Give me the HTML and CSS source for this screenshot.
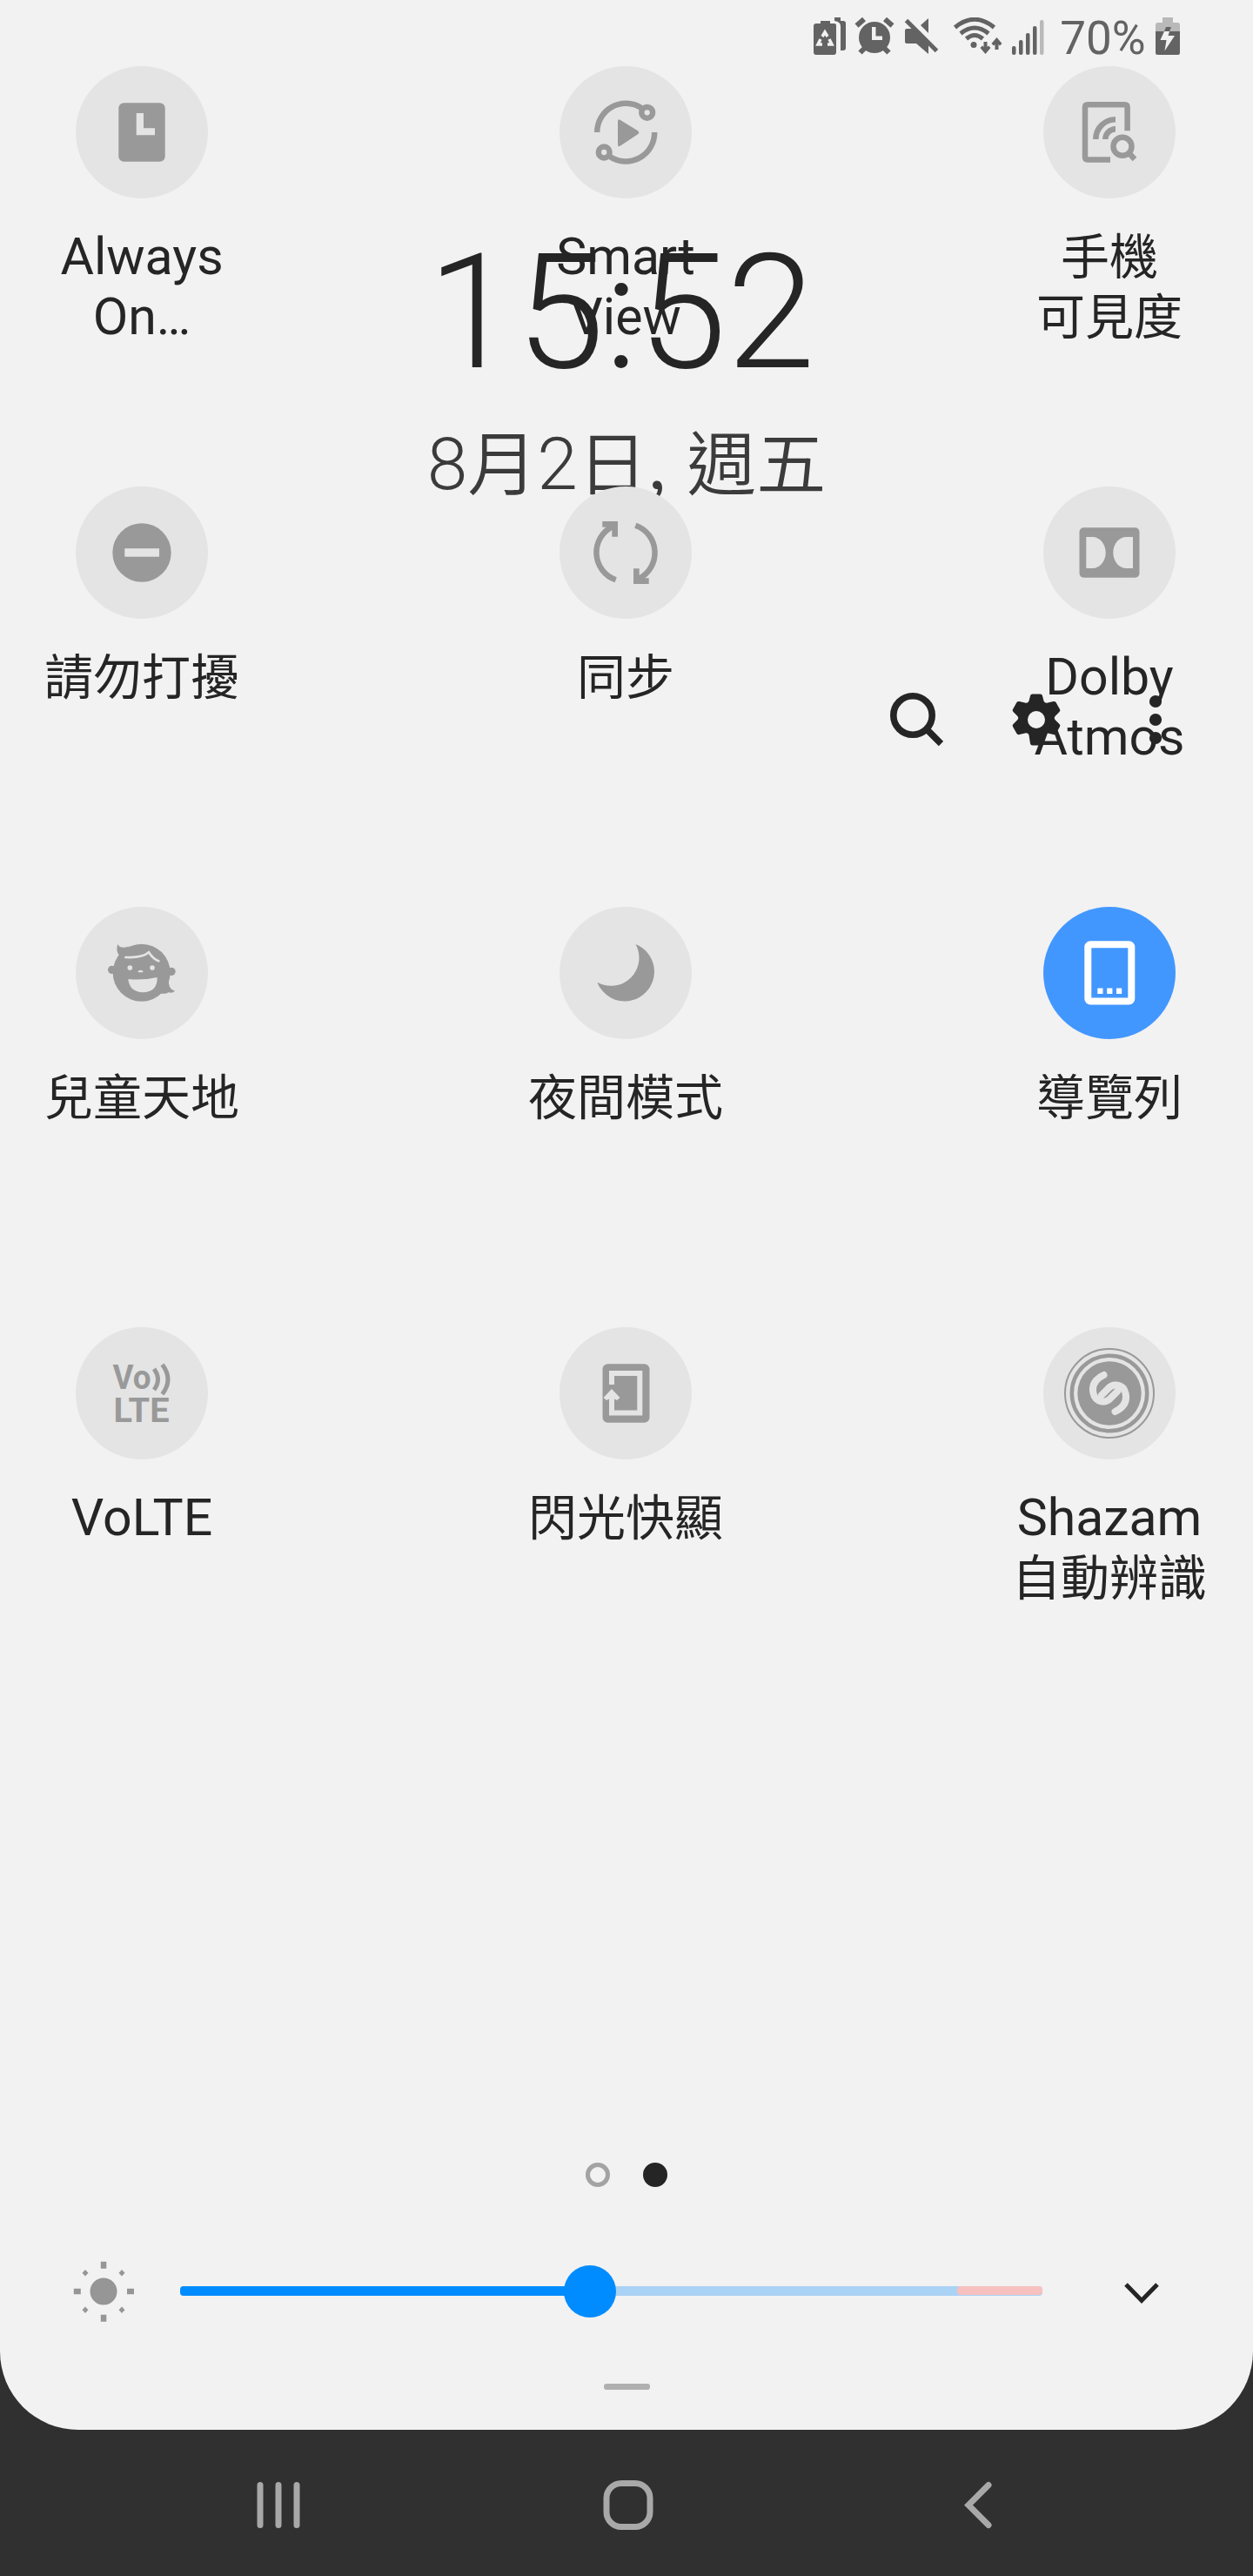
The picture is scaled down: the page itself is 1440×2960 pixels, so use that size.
FILE: index.html
```html
<!DOCTYPE html>
<html lang="zh-Hant">
<head>
    <meta charset="UTF-8">
    <meta name="viewport" content="width=device-width, initial-scale=1.0">
    <title>Quick Settings</title>
    <link rel="stylesheet" href="styles.css">
</head>
<body>
    <div class="panel">
        <div class="status-bar">
            <svg width="38" height="44" viewBox="0 0 38 44">
                <path d="M9 4h11v3h5q2 0 2 2v31q0 3-3 3H4q-3 0-3-3V10q0-3 3-3h5z"/>
                <path d="M25 0h7v4h3q3 0 3 3v28q0 3-3 3h-3V10q0-5-7-6z"/>
                <path class="cutout-line" d="M11 22l3-5 3 5M19 25l3 6h-5M11 31H6l3-6"/>
            </svg>
            <svg width="47" height="44" viewBox="0 0 47 44">
                <circle cx="23" cy="23" r="18"/>
                <path class="line thick" d="M2.500 9.500l8.500-7.500M43.500 9.500L35 2M6.500 40.500l6-6M39.500 40.500l-6-6"/>
                <path class="cutout" d="M20 11h4.500v10.500H32V26H20z"/>
            </svg>
            <svg width="47" height="44" viewBox="0 0 47 44">
                <path d="M3 13h9l16 16v13L14 30H3q-2 0-2-2V15q0-2 2-2zM19 9l9-8v17z"/>
                <path class="line" d="M2.500 3.500l35 35"/>
            </svg>
            <svg width="56" height="44" viewBox="0 0 56 44">
                <path class="line" d="M1.500 11.500Q24-7 46.500 11.500M8 18.500q16-13 32 0M14.500 24.500q9.500-8 19 0"/>
                <path class="line arrow" d="M36.500 28v10M49.500 37V27"/>
                <circle cx="23" cy="31.500" r="3.500"/>
                <path d="M30.500 35l2.500-2.500 3.500 3 3.500-3 2.500 2.500-6 7zM43.500 30l2.500 2.500 3.500-3 3.500 3L55.500 30l-6-7z"/>
            </svg>
            <svg width="42" height="44" viewBox="0 0 42 44">
                <rect x="1" y="33" width="4.500" height="10" rx="2"/>
                <rect x="9" y="26" width="4.500" height="17" rx="2"/>
                <rect x="17" y="18" width="4.500" height="25" rx="2"/>
                <rect x="25" y="10" width="4.500" height="33" rx="2"/>
                <rect class="dim" x="33" y="3" width="4.500" height="40" rx="2"/>
            </svg>
            <span class="battery-text">70%</span>
            <svg width="28" height="44" viewBox="0 0 28 44">
                <path class="dim" d="M8 0h12v6h5.500Q28 6 28 8.500V16H0V8.500Q0 6 2.500 6H8z"/>
                <path d="M0 16h28v24.500q0 2.500-2.500 2.500h-23Q0 43 0 40.500zM12 11h6l-2 5h-6z"/>
                <path class="cutout" d="M10 16h6l-1.500 5H22L10.500 38.500 12.500 26H5.500z"/>
            </svg>
        </div>

        <div class="content">
            <div class="header">
                <div class="clock">15:52</div>
                <div class="date"><span class="num">8</span>月<span class="num">2</span>日, 週五</div>
                <div class="tools">
                    <svg width="62" height="62" viewBox="0 0 62 62">
                        <circle class="line" cx="27" cy="26" r="22.200"/>
                        <path class="line" d="M43 42l16.500 16.500"/>
                    </svg>
                    <svg width="62" height="62" viewBox="0 0 62 62">
                        <path fill-rule="evenodd" d="M26.500 1.500h9q2 0 2.500 2l1.500 6q1.500 3 4.500 2l6.500-1.500q2-.5 3 1l4.500 8q1 1.500-.5 3l-4.500 4.500q-2.500 2.500 0 5l4.500 4.500q1.500 1.500.5 3l-4.500 8q-1 1.500-3 1l-6.500-1.500q-3-1-4.500 2L38 58.500q-.5 2-2.500 2h-9q-2 0-2.500-2l-1.500-10q-1.500-3-4.500-2L11.500 48q-2 .5-3-1L4 39q-1-1.500.5-3L9 31.500q2.500-2.500 0-5L4.500 22Q3 20.500 4 19l4.500-8q1-1.500 3-1L18 11.500q3 1 4.500-2L24 3.500q.5-2 2.500-2zM31 21a10 10 0 1 0 0 20 10 10 0 1 0 0-20z"/>
                    </svg>
                    <svg width="62" height="62" viewBox="0 0 62 62">
                        <circle cx="30" cy="10" r="7.100"/>
                        <circle cx="30" cy="31" r="7.100"/>
                        <circle cx="30" cy="52" r="7.100"/>
                    </svg>
                </div>
            </div>

            <div class="tiles">
                <div class="tile">
                    <svg class="icon" viewBox="0 0 152 152">
                        <rect x="49.300" y="42.300" width="53.400" height="67.400" rx="6"/>
                        <path class="cutout" d="M69.700 54H78v17.300h13v8H69.700z"/>
                    </svg>
                    <div class="label">Always<br>On…</div>
                </div>
                <div class="tile">
                    <svg class="icon" viewBox="0 0 152 152">
                        <path class="line" d="M43.200 76A33 33 0 0 1 94 48M109.200 76A33 33 0 0 1 58 104"/>
                        <circle class="line" cx="100.700" cy="53.300" r="6.400"/>
                        <circle class="line" cx="51.200" cy="99" r="6.400"/>
                        <path d="M67 63.500q0-3.500 3-1.500l20 12.300q2.500 2 0 4L70 91.500q-3 2-3-1.500z"/>
                    </svg>
                    <div class="label">Smart<br>View</div>
                </div>
                <div class="tile">
                    <svg class="icon" viewBox="0 0 152 152">
                        <path class="line" d="M77 107.500H51q-3 0-3-3V47.200q0-3 3-3h42.600q3 0 3 3v27M60.300 84A22.800 22.800 0 0 1 83 61.200M71.300 84A11.800 11.800 0 0 1 83 72.200M99 100.500l6 6.500"/>
                        <circle class="line" cx="91" cy="92.300" r="10.500"/>
                    </svg>
                    <div class="label"><span class="cjk">手機</span><br><span class="cjk">可見度</span></div>
                </div>

                <div class="tile">
                    <svg class="icon" viewBox="0 0 152 152">
                        <circle cx="76" cy="76" r="33.700"/>
                        <rect class="cutout" x="56.300" y="71.200" width="39.700" height="9.500"/>
                    </svg>
                    <div class="label"><span class="cjk">請勿打擾</span></div>
                </div>
                <div class="tile">
                    <svg class="icon" viewBox="0 0 152 152">
                        <path class="line" d="M64.700 107.300A33.300 33.300 0 0 1 61 46M87.300 44.700A33.300 33.300 0 0 1 91 106"/>
                        <path d="M49.300 40H67v17.700h-6.700v-11h-11zM102.700 112H85V94.300h6.700v11h11z"/>
                    </svg>
                    <div class="label"><span class="cjk">同步</span></div>
                </div>
                <div class="tile">
                    <svg class="icon" viewBox="0 0 152 152">
                        <rect x="41.500" y="47.200" width="69" height="57.500" rx="5"/>
                        <path class="cutout" d="M49.300 58H56.500C65 58 71.700 66 71.700 76S65 94 56.500 94H49.300zM103 58H95.500C87 58 80.300 66 80.300 76S87 94 95.500 94H103z"/>
                    </svg>
                    <div class="label">Dolby<br>Atmos</div>
                </div>

                <div class="tile">
                    <svg class="icon" viewBox="-78 -78 456 456">
                        <circle cx="149" cy="149" r="99"/>
                        <circle cx="47" cy="139" r="14"/>
                        <circle cx="252" cy="145" r="14"/>
                        <path d="M67 50q4 12 21 12 8 0 20-4L72 90Q59 72 67 50zM243 170q-4 36 21 42-8 9-22 5-12 8-32 2z"/>
                        <path class="cutout-line kid-hair" d="M94 96Q152 99 174 79 189 102 208 109"/>
                        <circle class="cutout" cx="109" cy="132" r="8.500"/>
                        <circle class="cutout" cx="186" cy="132" r="8.500"/>
                        <path class="cutout" d="M136 147q2-7 10-7t9 7q-9 2-19 0zM103 171q50 5 100-6 2 51-50 52-46-2-50-46z"/>
                    </svg>
                    <div class="label"><span class="cjk">兒童天地</span></div>
                </div>
                <div class="tile">
                    <svg class="icon" viewBox="0 0 152 152">
                        <path d="M87.500 43A33.900 33.900 0 1 1 43.400 86.700 32.300 32.300 0 0 0 87.500 43z"/>
                    </svg>
                    <div class="label"><span class="cjk">夜間模式</span></div>
                </div>
                <div class="tile">
                    <svg class="icon active" viewBox="0 0 152 152">
                        <rect class="line frame" x="51.300" y="43.300" width="50" height="65.200" rx="3"/>
                        <path d="M62.300 93.500h6.200v6.500h-6.200zM73.200 93.500h6.200v6.500h-6.200zM84 93.500h6.200v6.500H84z"/>
                    </svg>
                    <div class="label"><span class="cjk">導覽列</span></div>
                </div>

                <div class="tile">
                    <svg class="icon" viewBox="0 0 152 152">
                        <text x="42.500" y="71" textLength="44" lengthAdjust="spacingAndGlyphs">Vo</text>
                        <text x="43.500" y="109" textLength="64" lengthAdjust="spacingAndGlyphs">LTE</text>
                        <path class="line wave" d="M90 48q9 12 0 24M99.500 43q13 17 0 34"/>
                    </svg>
                    <div class="label">VoLTE</div>
                </div>
                <div class="tile">
                    <svg class="icon" viewBox="0 0 152 152">
                        <rect x="49.500" y="42.300" width="54" height="67.400" rx="6"/>
                        <path class="cutout-line" d="M60 66V53H92.300V98.500H60V78"/>
                        <path class="cutout" d="M60 71l9.500 10-3.500 3-6-3-6 3-3.500-3z"/>
                    </svg>
                    <div class="label"><span class="cjk">閃光快顯</span></div>
                </div>
                <div class="tile">
                    <svg class="icon" viewBox="0 0 152 152">
                        <circle cx="76" cy="76" r="36.700"/>
                        <circle class="line ring" cx="76" cy="76" r="43.200"/>
                        <circle class="line ring-thin" cx="76" cy="76" r="51"/>
                        <path class="cutout-line shazam" d="M69.500 55C59 60 55.500 67 57.500 76 60 87 72 88 78 81L85 74M82.500 97C93 92 96.500 85 94.500 76 92 65 80 64 74 71L67 78"/>
                    </svg>
                    <div class="label">Shazam<br><span class="cjk">自動辨識</span></div>
                </div>
            </div>
        </div>

        <div class="pager">
            <span class="dot"></span>
            <span class="dot current"></span>
        </div>

        <div class="brightness">
            <svg class="sun" width="70" height="70" viewBox="0 0 70 70">
                <circle cx="35" cy="35" r="15.500"/>
                <path d="M31.800 0.700h6.500v8h-6.500zM31.800 61.700h6.500v8h-6.500zM.800 31.800h8v6.500h-8zM62 31.800h8v6.500h-8z"/>
                <path d="M14 10l3.500 3.700L14 17.400l-3.500-3.700zM56 10l3.500 3.700-3.500 3.700-3.500-3.700zM14 52.500l3.500 3.700-3.500 3.700-3.500-3.700zM56 52.500l3.500 3.700-3.500 3.700-3.500-3.700z"/>
            </svg>
            <div class="track">
                <div class="fill"></div>
                <div class="warn"></div>
                <div class="thumb"></div>
            </div>
            <svg class="chevron" width="42" height="26" viewBox="0 0 42 26">
                <path class="line" d="M3 3l18 18.500L39 3"/>
            </svg>
        </div>

        <div class="handle"></div>
    </div>

    <div class="nav-bar">
        <svg width="60" height="60" viewBox="0 0 60 60">
            <path class="line" d="M9 7.500v46M30 7.500v46M51 7.500v46"/>
        </svg>
        <svg width="60" height="60" viewBox="0 0 60 60">
            <rect class="line" x="5" y="5.500" width="50" height="50" rx="17"/>
        </svg>
        <svg width="60" height="60" viewBox="0 0 60 60">
            <path class="line" d="M42 7.500L19 30.500l23 23"/>
        </svg>
    </div>
</body>
</html>
```
FILE: styles.css
```css
* {
    box-sizing: border-box;
}
body {
    margin: 0;
    background-color: #303030;
    color: #252525;
    font-family: Roboto, "Noto Sans CJK TC", sans-serif;
}
svg {
    display: block;
    flex-shrink: 0;
    fill: currentColor;
}
.line {
    fill: none;
    stroke: currentColor;
}
.panel {
    height: 2792px;
    background-color: #f2f2f2;
    border-radius: 0 0 90px 90px;
    display: flex;
    flex-direction: column;
}

/* status bar */
.status-bar {
    height: 76px;
    padding: 20px 84px 0 0;
    display: flex;
    justify-content: flex-end;
    gap: 10px;
    color: #636363;
}
.status-bar .line {
    stroke-width: 5;
}
.status-bar .thick {
    stroke-width: 6;
}
.status-bar .arrow {
    stroke-width: 4;
}
.status-bar .dim {
    fill: #b9b9b9;
}
.status-bar .cutout {
    fill: #f2f2f2;
}
.status-bar .cutout-line {
    fill: none;
    stroke: #f2f2f2;
    stroke-width: 3.5;
}
.battery-text {
    width: 104px;
    padding-left: 3px;
    font-size: 53px;
    line-height: 48px;
    text-align: center;
}

/* the clock header and the tiles share one cell */
.content {
    display: grid;
    height: 1932px;
}
.header, .tiles {
    grid-area: 1 / 1;
}
.header {
    display: flex;
    flex-direction: column;
    align-items: center;
}
.clock {
    margin-top: 174px;
    padding-right: 12px;
    font-size: 183.5px;
    font-weight: 300;
    line-height: 220px;
    white-space: nowrap;
}
.date {
    margin-top: 7px;
    font-family: "Noto Sans CJK TC", sans-serif;
    font-size: 80px;
    font-weight: 350;
    line-height: 100px;
    word-spacing: 6px;
    color: #3b3b3b;
    white-space: nowrap;
}
.date .num {
    font-family: Roboto, sans-serif;
    font-size: 84px;
    font-weight: 300;
}
.tools {
    align-self: flex-end;
    margin-top: 212px;
    padding-right: 80px;
    display: flex;
    gap: 76px;
}
.tools .line {
    stroke-width: 7.6;
}

/* tiles */
.tiles {
    position: relative;
    display: grid;
    grid-template-columns: repeat(3, 240px);
    grid-auto-rows: 483px;
    justify-content: space-between;
    padding: 0 45px 0 43px;
}
.tile {
    display: flex;
    flex-direction: column;
    align-items: center;
}
.icon {
    width: 152px;
    height: 152px;
    border-radius: 50%;
    background-color: #e4e4e4;
    color: #999;
}
.icon .line {
    stroke-width: 6.5;
}
.icon .cutout {
    fill: #e4e4e4;
}
.icon .cutout-line {
    fill: none;
    stroke: #e4e4e4;
    stroke-width: 6;
}
.icon .kid-hair {
    stroke-width: 8;
    stroke-linecap: round;
}
.icon .wave {
    stroke-width: 5;
}
.icon .ring {
    stroke-width: 4.5;
}
.icon .ring-thin {
    stroke-width: 2;
}
.icon .shazam {
    stroke-width: 8;
    stroke-linecap: round;
}
.icon text {
    font-size: 39px;
    font-weight: 700;
}
.icon.active {
    background-color: #4297ff;
    color: #fff;
}
.icon .frame {
    stroke-width: 8;
}
.label {
    margin-top: 33px;
    font-family: Roboto, sans-serif;
    font-size: 59px;
    line-height: 68.7px;
    text-align: center;
    white-space: nowrap;
}
.cjk {
    font-family: "Noto Sans CJK TC", sans-serif;
    font-size: 56px;
    line-height: 1;
}

/* bottom of the panel */
.pager {
    margin-top: 477px;
    display: flex;
    justify-content: center;
    gap: 38px;
}
.dot {
    width: 28px;
    height: 28px;
    border: 5px solid #a3a3a3;
    border-radius: 50%;
}
.dot.current {
    border-color: #252525;
    background-color: #252525;
}
.brightness {
    margin-top: 85px;
    padding: 0 107px 0 84px;
    height: 70px;
    display: flex;
    align-items: center;
}
.sun {
    color: #969696;
}
.track {
    position: relative;
    width: 991px;
    height: 11px;
    margin: 0 93px 1px 53px;
    border-radius: 4px;
    background-color: #a9d2f5;
}
.fill {
    width: 471px;
    height: 11px;
    border-radius: 4px;
    background-color: #008cff;
}
.warn {
    position: absolute;
    top: 0;
    right: 0;
    width: 98px;
    height: 10px;
    border-radius: 4px;
    background-color: #f6c1bf;
}
.thumb {
    position: absolute;
    left: 441px;
    top: -24px;
    width: 60px;
    height: 60px;
    border-radius: 50%;
    background-color: #008cff;
}
.chevron {
    margin-top: 4px;
}
.chevron .line {
    stroke-width: 5;
}
.handle {
    align-self: center;
    width: 53px;
    height: 7px;
    margin-top: 71px;
    border-radius: 3px;
    background-color: #b0b0b0;
}

/* navigation bar */
.nav-bar {
    height: 168px;
    padding: 56px 0 0 3px;
    display: flex;
    justify-content: center;
    gap: 342px;
    color: #a8a8a8;
}
.nav-bar .line {
    stroke-width: 7;
    stroke-linecap: round;
}
```
